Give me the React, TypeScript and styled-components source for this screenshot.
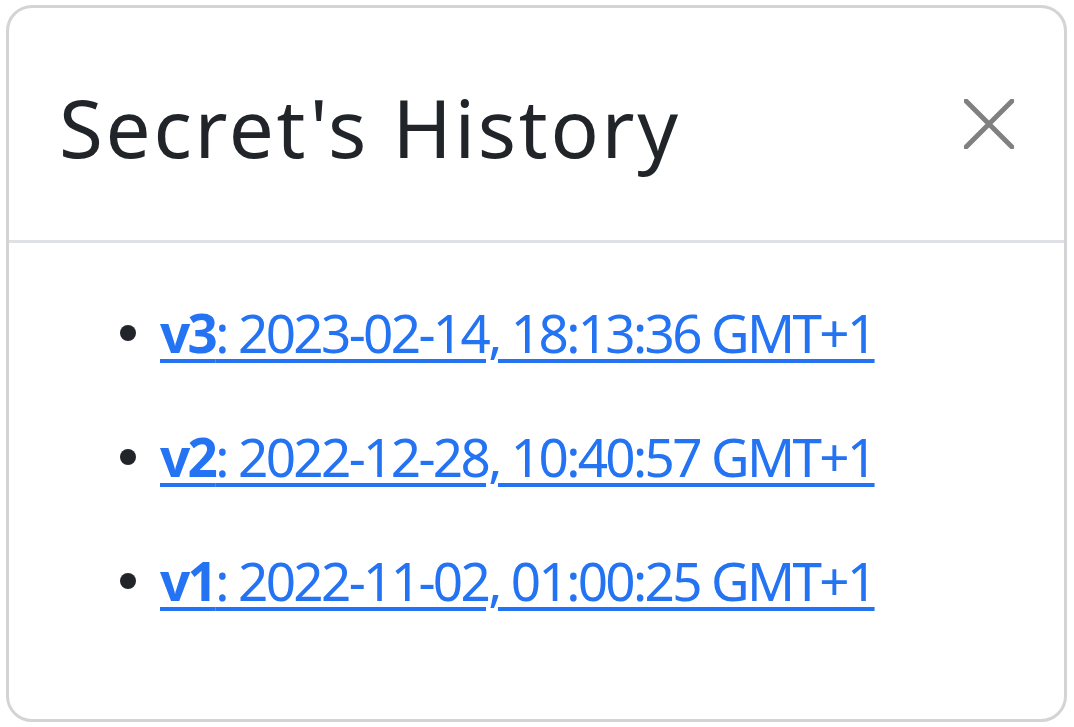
import React from "react";
import styled, { createGlobalStyle } from "styled-components";

const Global = createGlobalStyle`
  html, body { margin: 0; padding: 0; background: #ffffff; }
  body { font-family: "Noto Sans", "Open Sans", sans-serif; }
`;

const Modal = styled.div`
  box-sizing: border-box;
  margin: 5px 0 0 6px;
  width: 1061px;
  height: 717px;
  border: 3px solid #d4d4d4;
  border-radius: 26px;
  display: flex;
  flex-direction: column;
  background: #fff;
`;

const Header = styled.div`
  box-sizing: border-box;
  height: 235px;
  padding: 0 50px 0 50px;
  display: flex;
  align-items: center;
  justify-content: space-between;
  border-bottom: 3px solid #dee2e6;
`;

const Title = styled.h1`
  margin: 0;
  font-size: 80px;
  line-height: 1;
  font-weight: 400;
  letter-spacing: 2.7px;
  color: #212529;
  padding-top: 6px;
`;

const CloseButton = styled.button`
  border: 0;
  background: none;
  padding: 0;
  width: 50px;
  height: 50px;
  display: flex;
  align-items: center;
  justify-content: center;
  cursor: pointer;
`;

const Body = styled.div`
  padding: 50px 0 0 0;
`;

const List = styled.ul`
  list-style: none;
  margin: 0;
  padding: 0 0 0 111px;
  display: flex;
  flex-direction: column;
  gap: 44px;
`;

const Item = styled.li`
  display: flex;
  align-items: center;
  gap: 24px;
  height: 80px;
  font-size: 53px;
  line-height: 80px;
`;

const Bullet = styled.span`
  width: 16px;
  height: 16px;
  border-radius: 50%;
  background: #212529;
  flex: none;
`;

const Link = styled.a`
  color: #2373f2;
  text-decoration: underline;
  text-decoration-thickness: 4px;
  text-underline-offset: 6px;
  white-space: nowrap;
  letter-spacing: -2.65px;
`;

const Version = styled.b`
  font-weight: 700;
`;

const versions = [
  { v: "v3", date: "2023-02-14, 18:13:36 GMT+1" },
  { v: "v2", date: "2022-12-28, 10:40:57 GMT+1" },
  { v: "v1", date: "2022-11-02, 01:00:25 GMT+1" },
];

export default function App() {
  return (
    <>
      <Global />
      <Modal>
        <Header>
          <Title>Secret's History</Title>
          <CloseButton aria-label="Close">
            <svg width="50" height="50" viewBox="0 0 50 50">
              <path
                d="M2 2 L48 48 M48 2 L2 48"
                stroke="#808080"
                strokeWidth="5"
                strokeLinecap="round"
                fill="none"
              />
            </svg>
          </CloseButton>
        </Header>
        <Body>
          <List>
            {versions.map((x) => (
              <Item key={x.v}>
                <Bullet />
                <Link href="#">
                  <Version>{x.v}</Version>: {x.date}
                </Link>
              </Item>
            ))}
          </List>
        </Body>
      </Modal>
    </>
  );
}
